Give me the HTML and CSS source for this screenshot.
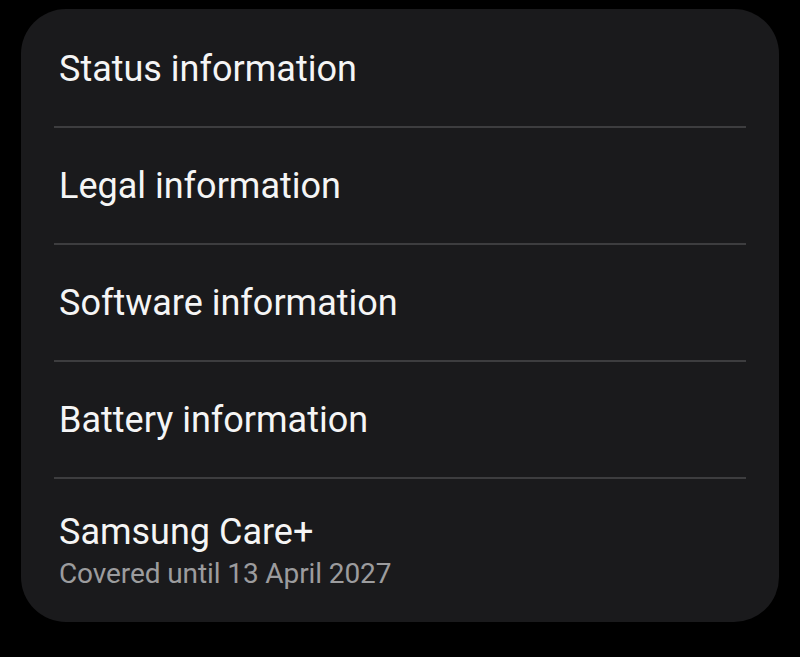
FILE: index.html
```html
<!DOCTYPE html>
<html>
<head>
  <title>About phone</title>
  <link rel="stylesheet" href="styles.css">
</head>
<body>
  <div class="card">
    <div class="item first">
      <span class="title">Status information</span>
    </div>
    <div class="item">
      <span class="title">Legal information</span>
    </div>
    <div class="item">
      <span class="title">Software information</span>
    </div>
    <div class="item">
      <span class="title">Battery information</span>
    </div>
    <div class="item last">
      <span class="title">Samsung Care+</span>
      <span class="subtitle">Covered until 13 April 2027</span>
    </div>
  </div>
</body>
</html>
```

FILE: styles.css
```css
body {
  margin: 0;
  background-color: #000;
  font-family: Roboto, "Noto Sans", sans-serif;
  color: #f5f5f5;
}

.card {
  margin: 9px 21px 0;
  width: 758px;
  height: 613px;
  box-sizing: border-box;
  border-radius: 45px;
  background-color: #1a1a1c;
  display: flex;
  flex-direction: column;
}

.item {
  margin: 0 33px;
  padding-left: 5px;
  height: 115px;
  display: flex;
  flex-direction: column;
  justify-content: center;
  border-bottom: 2px solid #3d3d3f;
}

.item.first {
  box-sizing: border-box;
  height: 119px;
  padding-top: 2px;
}

.item.last {
  height: auto;
  flex: 1;
  justify-content: flex-start;
  border-bottom: none;
  padding-top: 32px;
}

.title {
  font-size: 36px;
  line-height: 42px;
}

.subtitle {
  margin-top: 4px;
  font-size: 28px;
  line-height: 34px;
  letter-spacing: -0.1px;
  color: #9c9c9e;
}
```
